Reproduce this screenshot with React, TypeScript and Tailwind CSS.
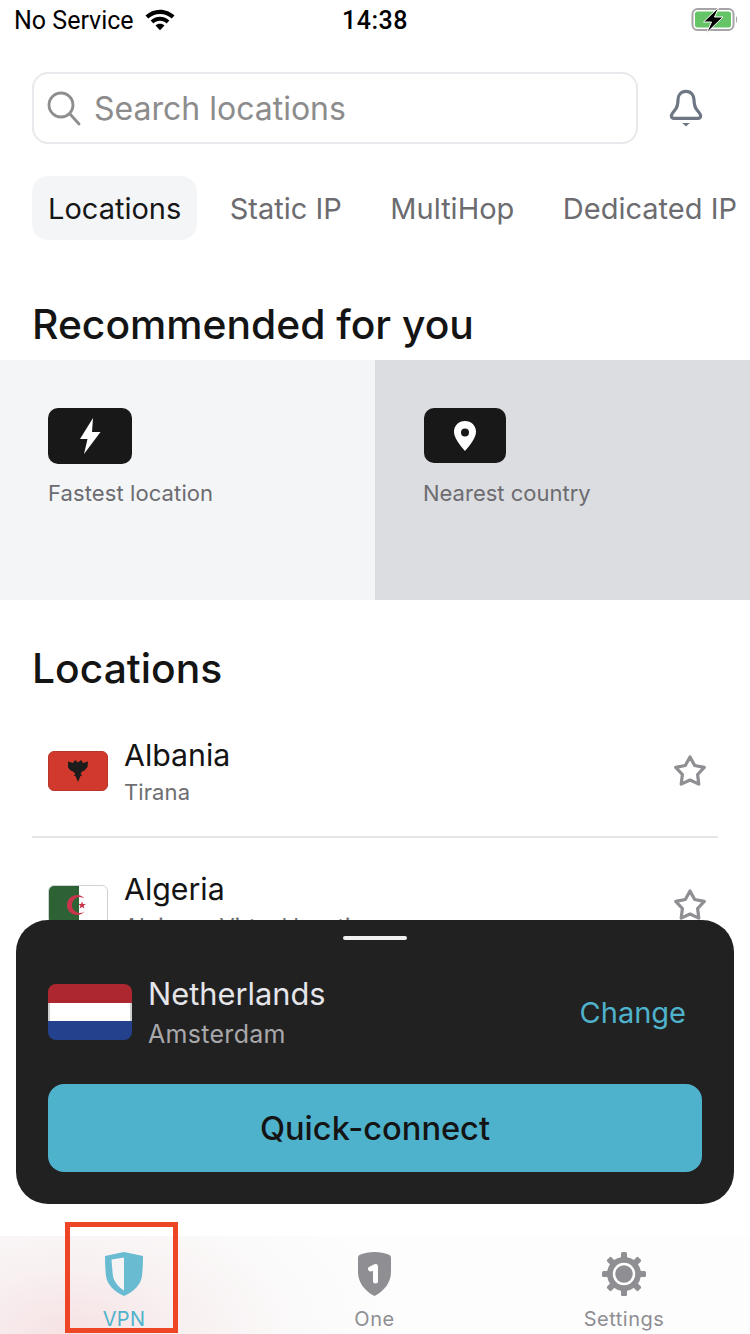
import React from "react";

const font = { fontFamily: "Inter, 'Noto Sans', sans-serif" };

function Star() {
  return (
    <svg width="36" height="36" viewBox="0 0 36 36" fill="none" stroke="#8e8e93" strokeWidth="3.2" strokeLinejoin="round">
      <path d="M18 4l4.700 8.500 9.600 1.900-6.700 7.100 1.200 9.600L18 27l-8.800 4.100 1.200-9.600-6.700-7.100 9.600-1.900z" />
    </svg>
  );
}

function Row({ name, sub, flag }: { name: string; sub: string; flag: React.ReactNode }) {
  return (
    <div className="flex items-center h-[134px] pt-[2px] pl-4 pr-[10px] border-b-2 border-[#e5e6ea] shrink-0">
      {flag}
      <div className="ml-[17px] -translate-x-px translate-y-px flex-1 flex flex-col">
        <span className="text-[30.300px] leading-[36px] text-[#141414]">{name}</span>
        <span className="text-[22px] leading-[30px] mt-[4px] text-[#6e6e70] tracking-[0.1px]">{sub}</span>
      </div>
      <Star />
    </div>
  );
}

function Tab({ label, active }: { label: string; active?: boolean }) {
  return (
    <div className={`h-16 px-4 pt-px flex items-center rounded-2xl text-[29px] shrink-0 ${active ? "bg-[#f4f5f7] text-[#161616]" : "text-[#6c6c70]"}`}>
      {label}
    </div>
  );
}

export default function App() {
  return (
    <div className="relative w-[750px] h-[1334px] overflow-hidden bg-white flex flex-col" style={font}>
      {/* status bar */}
      <div className="h-10 shrink-0 relative flex items-center pl-[14px] text-black">
        <span className="text-[25px] leading-none" style={{ fontFamily: "Roboto, sans-serif" }}>No Service</span>
        <svg className="ml-[11px]" width="30" height="22" viewBox="0 0 32 22" fill="#000">
          <path d="M16 0C10 0 4.500 2.400 0.500 6.300l3 3.200C6.700 6.400 11.100 4.500 16 4.500s9.300 1.900 12.500 5l3-3.200C27.500 2.400 22 0 16 0z" />
          <path d="M16 7.500c-3.900 0-7.400 1.500-10 4l3 3.100c1.800-1.800 4.300-2.800 7-2.800s5.200 1 7 2.800l3-3.100c-2.600-2.500-6.100-4-10-4z" />
          <path d="M16 15c-1.900 0-3.600 0.700-4.800 1.900L16 22l4.800-5.100C19.600 15.700 17.900 15 16 15z" />
        </svg>
        <span className="absolute left-[342px] top-[7px] text-[25px] leading-[28px] font-medium tracking-[0.5px]" style={{ fontFamily: "Roboto, sans-serif" }}>14:38</span>
        <svg className="absolute left-[690px] top-[7px]" width="50" height="26" viewBox="0 0 50 26">
          <rect x="2.500" y="2" width="41" height="21" rx="5" fill="none" stroke="#a5a5a5" strokeWidth="2" />
          <rect x="5" y="4.500" width="36" height="16" rx="2.500" fill="#65c466" />
          <path d="M46 9c1.500 0.500 1.500 6.500 0 7z" fill="#a5a5a5" />
          <path d="M29 0L13.500 15h8L16.500 26 33 10h-8.500z" fill="#000" stroke="#fff" strokeWidth="1" />
        </svg>
      </div>

      {/* search */}
      <div className="flex items-center mt-8 pl-8 shrink-0">
        <div className="w-[606px] h-[72px] rounded-2xl border-2 border-[#e8e9ed] flex items-center pl-3">
          <svg width="36" height="36" viewBox="0 0 36 36" fill="none" stroke="#8e8e8e" strokeWidth="2.800" strokeLinecap="round">
            <circle cx="15" cy="15" r="12" />
            <path d="M24 24l9 10" />
          </svg>
          <span className="ml-[12px] pt-[2px] text-[32px] text-[#8c8c8c]">Search locations</span>
        </div>
        <svg className="ml-[31px]" width="34" height="40" viewBox="0 0 36 40" fill="none" stroke="#6f7683" strokeWidth="3.400" strokeLinejoin="round">
          <path d="M18 2.500c-5.500 0-8.500 4-8.500 9 0 4-.8 8-3.500 11-2 2.300-3.500 4-3.500 5.800 0 1.700 1.300 2.700 3 2.700h25c1.700 0 3-1 3-2.700 0-1.800-1.500-3.500-3.500-5.800-2.700-3-3.500-7-3.500-11 0-5-3-9-8.500-9z" />
          <path d="M14 36h8l-4 3.500z" fill="#6f7683" stroke="none" />
        </svg>
      </div>

      {/* tabs */}
      <div className="flex items-center mt-8 pl-8 gap-[16.500px] shrink-0 whitespace-nowrap">
        <Tab label="Locations" active />
        <Tab label="Static IP" />
        <Tab label="MultiHop" />
        <Tab label="Dedicated IP" />
      </div>

      {/* recommended */}
      <div className="mt-[59px] pl-8 text-[40.800px] leading-[50px] font-medium text-[#141414] shrink-0">Recommended for you</div>
      <div className="mt-[11px] flex h-[240px] shrink-0">
        <div className="w-1/2 bg-[#f4f5f7] pl-12 pt-12">
          <div className="w-[84px] h-14 rounded-[10px] bg-[#181818] flex items-center justify-center">
            <svg width="24" height="38" viewBox="0 0 24 38" fill="#fff">
              <path d="M15 1L2 22h7.500L6 37 22.500 15H14z" />
            </svg>
          </div>
          <div className="mt-[15px] text-[22px] leading-[28px] text-[#6c6c70] tracking-[0.1px]">Fastest location</div>
        </div>
        <div className="w-1/2 bg-[#dcdde1] pl-[49px] pt-12">
          <div className="w-[82px] h-[55px] rounded-[10px] bg-[#181818] flex items-center justify-center">
            <svg width="24" height="32" viewBox="0 0 24 32" fill="#fff" fillRule="evenodd">
              <path d="M12 1C5.700 1 1 5.700 1 11.800 1 18 7 25.500 12 31c5-5.500 11-13 11-19.200C23 5.700 18.300 1 12 1zm0 7.500a4 4 0 1 1 0 8 4 4 0 0 1 0-8z" />
            </svg>
          </div>
          <div className="mt-4 -ml-px text-[22px] leading-[28px] text-[#6c6c70]">Nearest country</div>
        </div>
      </div>

      {/* locations */}
      <div className="mt-[43px] pl-8 text-[40.800px] leading-[50px] font-medium text-[#141414] shrink-0">Locations</div>
      <div className="mx-8 mt-[11px] flex flex-col">
        <Row
          name="Albania"
          sub="Tirana"
          flag={
            <div className="w-[60px] h-10 rounded-md bg-[#d1392c] border border-[#b8352a] flex items-center justify-center">
              <svg width="20" height="22" viewBox="0 0 20 22" fill="#1c1c1c">
                <path d="M0 1.500l5 1.500 2-3 3 2.500L13 0l2 3 5-1.500-.5 5.500-3 3.500-2.500 1-1.500 2.500 2 1.500-2 .5-2.500 6-2.500-6-2-.5 2-1.500L5 11.500l-2.500-1-3-3.500z" />
              </svg>
            </div>
          }
        />
        <Row
          name="Algeria"
          sub="Algiers - Virtual location"
          flag={
            <div className="w-[60px] h-10 rounded-md border border-[#cfd2d4] overflow-hidden flex relative bg-white">
              <div className="w-[30px] bg-[#2c6234]" />
              <svg className="absolute left-[18px] top-[8px]" width="22" height="22" viewBox="0 0 22 22">
                <path d="M17.500 4.500a10 10 0 1 0 0 13 8 8 0 1 1 0-13z" fill="#c8344a" />
                <path d="M15 7.500l1 2.500h2.800l-2.200 1.700.8 2.800-2.400-1.600-2.400 1.600.8-2.800-2.100-1.700h2.700z" fill="#c8344a" />
              </svg>
            </div>
          }
        />
      </div>

      {/* bottom sheet */}
      <div className="absolute left-4 top-[920px] w-[718px] h-[284px] rounded-[32px] bg-[#212121] px-8 z-10">
        <div className="absolute left-[327px] top-[16px] w-16 h-1 rounded-full bg-[#f0f0f0]" />
        <div className="flex items-center h-[164px] pt-[20px]">
          <div className="w-[84px] h-14 rounded-lg overflow-hidden flex flex-col shrink-0">
            <div className="flex-1 bg-[#ad2730]" />
            <div className="flex-1 bg-white border-x-2 border-[#cfcfcf]" />
            <div className="flex-1 bg-[#23418c]" />
          </div>
          <div className="ml-4 flex-1 flex flex-col">
            <span className="text-[30.800px] leading-[36px] text-[#e5e5ea]">Netherlands</span>
            <span className="text-[25px] leading-[30px] mt-[7px] text-[#a8a8ac] tracking-[0.3px]">Amsterdam</span>
          </div>
          <span className="text-[29px] pt-[2px] text-[#4fb2cc] mr-4">Change</span>
        </div>
        <div className="h-[88px] rounded-2xl bg-[#4fb2cc] flex items-center justify-center text-[32.600px] font-medium text-[#141414]">Quick-connect</div>
      </div>

      {/* tab bar */}
      <div className="absolute left-0 right-0 bottom-0 h-[98px] flex bg-[radial-gradient(ellipse_330px_190px_at_70px_100%,#f6e2e4_0%,#f8f0f1_35%,#fbfafa_70%,#fdfdfd_100%)]">
        <div className="w-[248px] flex flex-col items-center pt-4">
          <svg width="38" height="44" viewBox="0 0 38 44">
            <path d="M19 0L0 4c0 9 .5 15 1 20 1 8 8 16 18 20 10-4 17-12 18-20 .5-5 1-11 1-20z" fill="#69bbd2" />
            <path d="M19 5.500L6.500 7.500C7 14 7.500 20 8 24c.8 5 5 11 11 14.500z" fill="#f6f3f4" />
          </svg>
          <span className="text-[20px] leading-[24px] mt-[11px] text-[#4fb2cc] tracking-[0.3px]">VPN</span>
        </div>
        <div className="w-[253px] flex flex-col items-center pt-4">
          <svg width="33" height="44" viewBox="0 0 33 44">
            <path d="M16.500 0C11 0 6.500 1 2.500 2.500 1 3 0 4 0 6v14c0 10 6.500 19 16.500 24C26.500 39 33 30 33 20V6c0-2-1-3-2.500-3.500C26.500 1 22 0 16.500 0z" fill="#8e8e93" />
            <path d="M12.500 17L17.500 14.500V29" fill="none" stroke="#fff" strokeWidth="5" strokeLinecap="round" strokeLinejoin="round" />
          </svg>
          <span className="text-[20px] leading-[24px] mt-[11px] text-[#8e8e93] tracking-[0.5px]">One</span>
        </div>
        <div className="w-[246px] flex flex-col items-center pt-4">
          <svg width="44" height="44" viewBox="0 0 44 44">
            <g fill="#8e8e93">
              <circle cx="22" cy="22" r="17" />
              <rect x="19" y="0" width="6" height="44" rx="1.500" />
              <rect x="19" y="0" width="6" height="44" rx="1.500" transform="rotate(45 22 22)" />
              <rect x="19" y="0" width="6" height="44" rx="1.500" transform="rotate(90 22 22)" />
              <rect x="19" y="0" width="6" height="44" rx="1.500" transform="rotate(135 22 22)" />
            </g>
            <circle cx="22" cy="22" r="10" fill="#8e8e93" stroke="#fff" strokeWidth="2.500" />
          </svg>
          <span className="text-[20px] leading-[24px] mt-[11px] text-[#8e8e93] tracking-[0.5px]">Settings</span>
        </div>
      </div>

      {/* annotation frame */}
      <div className="absolute left-[65px] top-[1222px] w-[113px] h-[111px] border-[5px] border-[#ee4526] z-20" />
    </div>
  );
}
